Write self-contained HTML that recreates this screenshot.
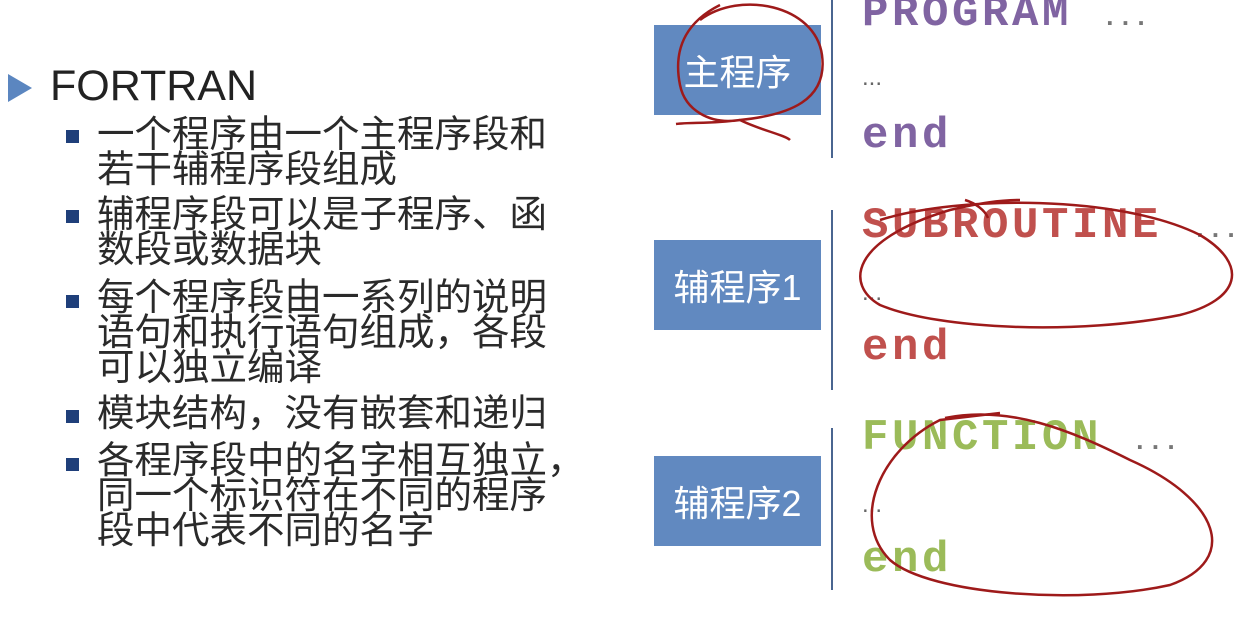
<!DOCTYPE html>
<html><head><meta charset="utf-8"><style>
body{margin:0;width:1258px;height:620px;background:#fff;position:relative;overflow:hidden;font-family:"Liberation Sans","Noto Sans CJK SC",sans-serif}
.a{position:absolute;white-space:nowrap}
.cn{font-size:37.5px;color:#2a2a2a;line-height:35px;left:97px}
.sq{position:absolute;left:66px;width:13px;height:13px;background:#1f3f7a}
.box{position:absolute;left:654px;width:167px;height:90px;background:#6189c0;color:#fff;font-size:36px;display:flex;align-items:center;justify-content:center}
.vl{position:absolute;left:831px;width:2px;background:#4a6590}
.code{position:absolute;left:862px;font-family:"Liberation Mono",monospace;font-weight:bold;font-size:44px;letter-spacing:3.6px;line-height:40px}
.dot{position:absolute;left:862px;font-size:24px;color:#666}
.code span{font-size:26px;letter-spacing:0;color:#777}
</style></head><body>
<svg class="a" style="left:8px;top:74px" width="26" height="28"><polygon points="0,0 24,14 0,28" fill="#5b86c0"/></svg>
<div class="a" style="left:50px;top:62px;font-size:43px;color:#222">FORTRAN</div>
<div class="sq" style="top:130px"></div>
<div class="a cn" style="top:117px">一个程序由一个主程序段和<br>若干辅程序段组成</div>
<div class="sq" style="top:210px"></div>
<div class="a cn" style="top:197px">辅程序段可以是子程序、函<br>数段或数据块</div>
<div class="sq" style="top:295px"></div>
<div class="a cn" style="top:280px">每个程序段由一系列的说明<br>语句和执行语句组成，各段<br>可以独立编译</div>
<div class="sq" style="top:410px"></div>
<div class="a cn" style="top:396px">模块结构，没有嵌套和递归</div>
<div class="sq" style="top:458px"></div>
<div class="a cn" style="top:443px">各程序段中的名字相互独立，<br>同一个标识符在不同的程序<br>段中代表不同的名字</div>

<div class="box" style="top:25px">主程序</div>
<div class="box" style="top:240px">辅程序1</div>
<div class="box" style="top:456px">辅程序2</div>
<div class="vl" style="top:0;height:158px"></div>
<div class="vl" style="top:210px;height:180px"></div>
<div class="vl" style="top:428px;height:162px"></div>

<div class="code" style="top:-6px;color:#8064a2">PROGRAM <span>...</span></div>
<div class="dot" style="top:64px">...</div>
<div class="code" style="top:116px;color:#8064a2">end</div>
<div class="code" style="top:206px;color:#c0504d">SUBROUTINE <span>...</span></div>
<div class="dot" style="top:279px">...</div>
<div class="code" style="top:328px;color:#c0504d">end</div>
<div class="code" style="top:418px;color:#9bbb59">FUNCTION <span>...</span></div>
<div class="dot" style="top:491px">...</div>
<div class="code" style="top:540px;color:#9bbb59">end</div>

<svg class="a" style="left:0;top:0" width="1258" height="620">
<g fill="none" stroke="#9e1a1a" stroke-width="2.5">
<path d="M700,20 C740,-10 815,5 822,55 C828,100 790,115 740,120 C710,124 690,122 676,124 M740,120 C710,125 685,110 680,85 C672,45 690,20 720,5"/>
<path d="M740,120 C760,130 785,135 790,140"/>
<path d="M880,220 C960,195 1120,195 1200,235 C1250,265 1240,300 1180,315 C1080,335 940,330 880,305 C845,285 850,240 950,210 C980,203 1000,200 1020,200 M965,200 C975,203 985,210 988,218"/>
<path d="M945,418 C1010,405 1070,430 1130,460 C1220,500 1240,560 1170,585 C1080,605 930,595 890,560 C850,520 880,450 940,420 L1000,413"/>
</g></svg>
</body></html>
